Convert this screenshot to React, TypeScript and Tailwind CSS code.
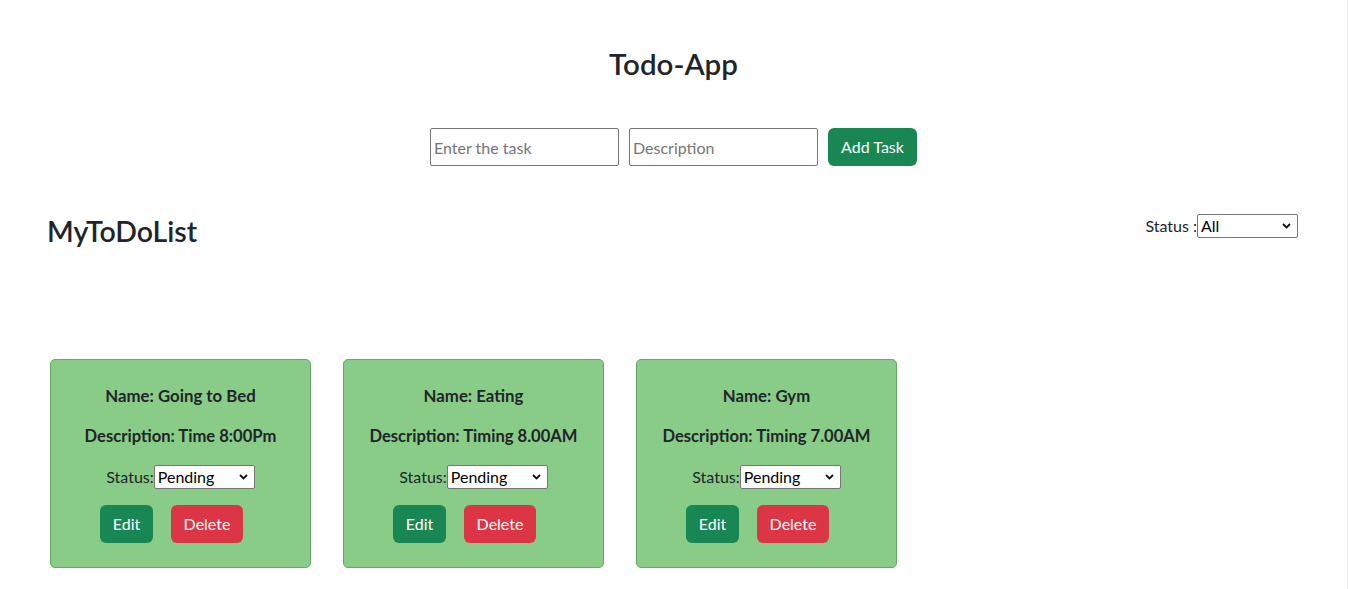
import React from "react";

const font = { fontFamily: "Lato, 'Noto Sans', sans-serif" };

function Chevron() {
  return (
    <svg
      className="pointer-events-none absolute right-[7px] top-1/2 -translate-y-1/2"
      width="9"
      height="6"
      viewBox="0 0 9 6"
      fill="none"
    >
      <path d="M1 1 L4.5 4.5 L8 1" stroke="#111" strokeWidth="1.8" />
    </svg>
  );
}

function Select({ value }: { value: string }) {
  return (
    <span className="relative inline-block h-6 w-[101px] align-middle">
      <select
        defaultValue={value}
        className="h-6 w-[101px] appearance-none rounded-[2px] border border-[#767676] bg-white pl-[3px] text-[16px] leading-[22px] text-black outline-none"
      >
        <option>All</option>
        <option>Pending</option>
        <option>Completed</option>
      </select>
      <Chevron />
    </span>
  );
}

const todos = [
  { name: "Going to Bed", desc: "Time 8:00Pm" },
  { name: "Eating", desc: "Timing 8.00AM" },
  { name: "Gym", desc: "Timing 7.00AM" },
];

function Card({ name, desc }: { name: string; desc: string }) {
  return (
    <div className="w-[261px] rounded-[5px] border border-[#67a867] bg-[#88cc88] pt-6 pb-6 text-center text-[#212529]">
      <p className="mb-4 text-[16.8px] font-bold leading-6">Name: {name}</p>
      <p className="mb-[17px] text-[16.6px] font-bold leading-6">Description: {desc}</p>
      <div className="flex h-6 items-center justify-center text-[16px]">
        <span className="leading-6">Status:</span>
        <Select value="Pending" />
      </div>
      <div className="mt-4 flex justify-center">
        <button className="mr-[18px] h-[38px] w-[53px] rounded-[6px] bg-[#198754] text-[16px] text-white">
          Edit
        </button>
        <button className="mr-[18px] h-[38px] w-[72px] rounded-[6px] bg-[#dc3545] text-[16px] text-white">
          Delete
        </button>
      </div>
    </div>
  );
}

export default function App() {
  return (
    <div className="flex min-h-[589px] w-[1349px] bg-white text-[#212529]" style={font}>
      <div className="w-[1347px]">
        <h2 className="pt-[45px] text-center text-[29.5px] font-semibold leading-[38px]">Todo-App</h2>
        <div className="mt-[45px] flex justify-center">
          <input
            placeholder="Enter the task"
            className="h-[38px] w-[189px] rounded-[2px] border border-[#767676] px-[3px] text-[16px] placeholder-[#757575] outline-none"
          />
          <input
            placeholder="Description"
            className="ml-[10px] h-[38px] w-[189px] rounded-[2px] border border-[#767676] px-[3px] text-[16px] placeholder-[#757575] outline-none"
          />
          <button className="ml-[10px] h-[38px] w-[89px] rounded-[6px] bg-[#198754] text-[16px] text-white">
            Add Task
          </button>
        </div>
        <div className="mt-[46px] flex items-start justify-between pl-[47px] pr-[49px]">
          <h2 className="text-[28.5px] font-semibold leading-[38px]">MyToDoList</h2>
          <div className="mt-[2px] flex items-center text-[16px]">
            <span className="leading-6">Status :</span>
            <Select value="All" />
          </div>
        </div>
        <div className="mt-[109px] flex gap-[32px] pl-[50px]">
          {todos.map((t) => (
            <Card key={t.name} name={t.name} desc={t.desc} />
          ))}
        </div>
      </div>
      <div className="w-px bg-[#ececec]" />
      <div className="w-px bg-white" />
    </div>
  );
}
